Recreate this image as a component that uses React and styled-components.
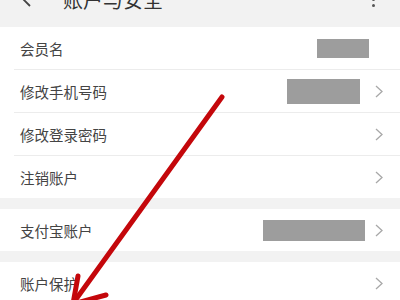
import styled, { createGlobalStyle } from "styled-components"

const Global = createGlobalStyle`
  html, body { margin: 0; padding: 0; background: #f2f2f2; }
  body { font-family: "Noto Sans CJK SC", "Noto Sans", sans-serif; }
`

const rows1 = [
  { label: "会员名", block: { w: 52, h: 19, mr: 14 }, arrow: false },
  { label: "修改手机号码", block: { w: 73, h: 25, mr: 15 }, arrow: true },
  { label: "修改登录密码", arrow: true },
  { label: "注销账户", arrow: true },
]

function Chevron() {
  return (
    <svg width="8" height="13" viewBox="0 0 8 13">
      <path d="M1 1 L7 6.5 L1 12" fill="none" stroke="#a8a8a8" strokeWidth="1.3" />
    </svg>
  )
}

function Row({ label, block, arrow, first }) {
  return (
    <Item $first={first}>
      <Label>{label}</Label>
      {block && <Redact $w={block.w} $h={block.h} $mr={block.mr} />}
      {arrow ? <Chevron /> : <Spacer />}
    </Item>
  )
}

export default function App() {
  return (
    <Page>
      <Global />
      <Header>
        <svg width="18" height="16" viewBox="0 0 18 16">
          <path d="M1 8 H17 M1 8 L8 1 M1 8 L8 15" fill="none" stroke="#444" strokeWidth="1.8" />
        </svg>
        <Title>账户与安全</Title>
        <Dots>
          <i /><i /><i />
        </Dots>
      </Header>
      <Group>
        {rows1.map((r, i) => (
          <Row key={r.label} {...r} first={i === 0} />
        ))}
      </Group>
      <Group>
        <Row label="支付宝账户" block={{ w: 102, h: 21, mr: 10 }} arrow first />
      </Group>
      <Group>
        <Row label="账户保护" arrow first />
      </Group>
      <Annotation width="400" height="300" viewBox="0 0 400 300">
        <g stroke="#c4070b" strokeWidth="5" strokeLinecap="round" strokeLinejoin="round" fill="none">
          <path d="M222 97 L74 302" />
          <path d="M78 276 L73 304 L106 295" />
        </g>
      </Annotation>
    </Page>
  )
}

const Page = styled.div`
  position: relative;
  width: 400px;
  height: 300px;
  overflow: hidden;
  background: #f2f2f2;
`

const Header = styled.div`
  height: 56px;
  margin-top: -29px;
  display: flex;
  align-items: center;
  padding: 0 22px;
  background: #f2f2f2;
  svg { flex: none; }
`

const Title = styled.h1`
  margin: 0 0 0 23px;
  flex: 1;
  font-size: 20px;
  font-weight: 400;
  color: #333;
`

const Dots = styled.div`
  display: flex;
  flex-direction: column;
  gap: 3px;
  margin-right: 3px;
  i {
    width: 3.5px;
    height: 3.5px;
    border-radius: 50%;
    background: #555;
  }
`

const Group = styled.div`
  background: #fff;
  & + & { margin-top: 11px; }
`

const Item = styled.div`
  height: 42px;
  display: flex;
  align-items: center;
  padding: 0 17px 0 20px;
  position: relative;
  ${(p) => !p.$first && `
    &::before {
      content: "";
      position: absolute;
      left: 14px;
      right: 0;
      top: -1px;
      height: 1px;
      background: #ececec;
    }
    margin-top: 1px;
  `}
`

const Label = styled.span`
  flex: 1;
  font-size: 14.5px;
  color: #444;
`

const Redact = styled.span`
  width: ${(p) => p.$w}px;
  height: ${(p) => p.$h}px;
  margin-right: ${(p) => p.$mr}px;
  background: #9d9d9d;
`

const Spacer = styled.span`
  width: 0;
`

const Annotation = styled.svg`
  position: absolute;
  left: 0;
  top: 0;
  pointer-events: none;
`
